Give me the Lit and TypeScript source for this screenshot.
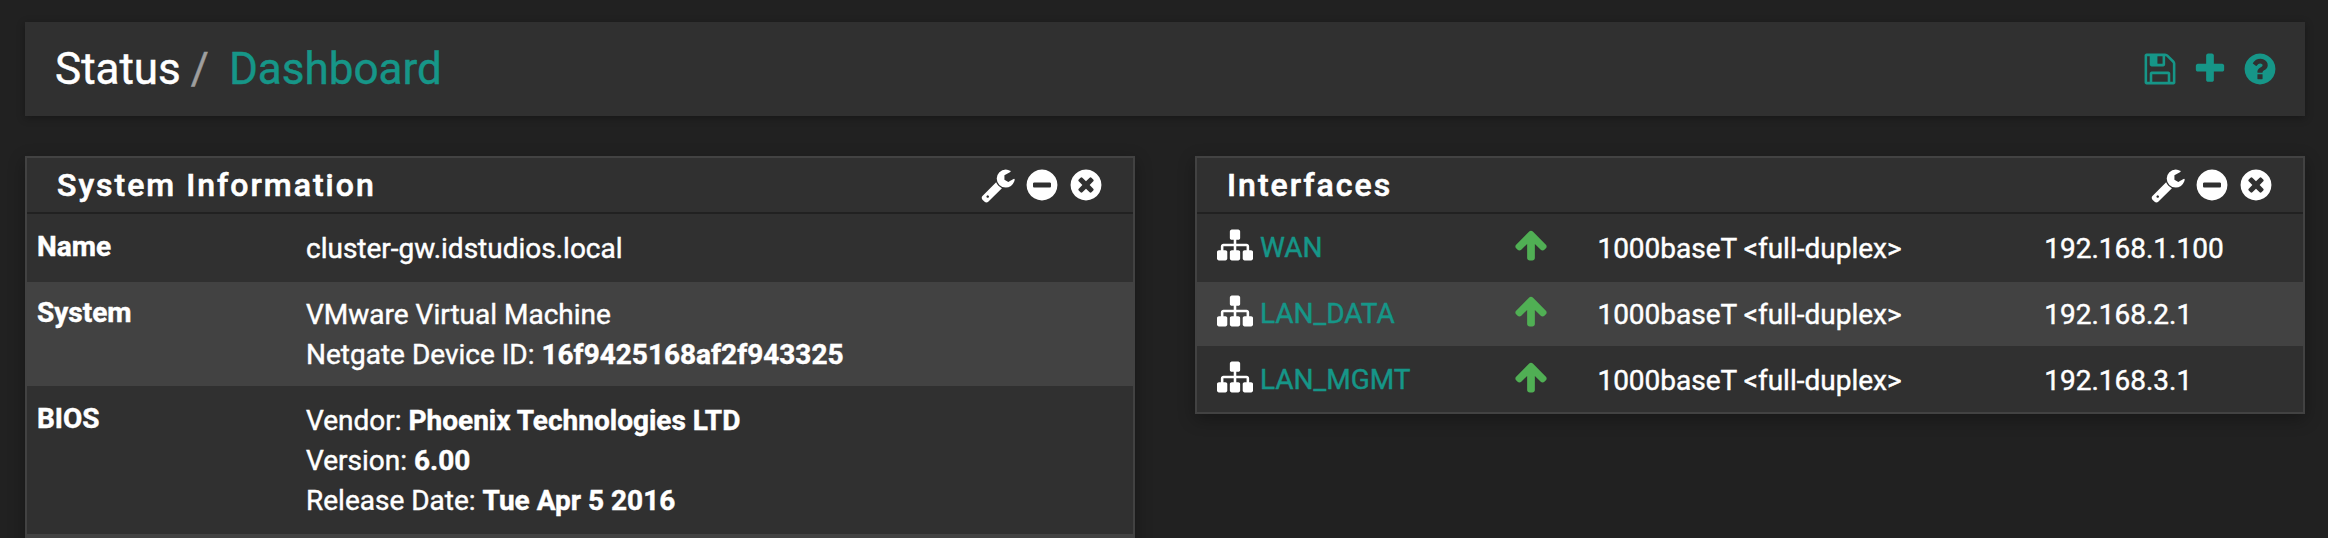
import { LitElement, html, css, svg } from "lit";
import { customElement, property } from "lit/decorators.js";

const DISC =
  "q0 209-103 385.5t-279.5 279.5-385.5 103-385.5-103-279.5-279.5-103-385.5 103-385.5 279.5-279.5 385.5-103 385.5 103 279.5 279.5 103 385.5z";

const ICONS: Record<string, string> = {
  save: "M512 1536h768v-384h-768v384zm896 0h128v-896q0-14-10-38.5t-20-34.5l-281-281q-10-10-34-20t-39-10v416q0 40-28 68t-68 28h-576q-40 0-68-28t-28-68v-416h-128v1280h128v-416q0-40 28-68t68-28h832q40 0 68 28t28 68v416zm-384-928v-320q0-13-9.5-22.5t-22.5-9.5h-192q-13 0-22.5 9.5t-9.5 22.5v320q0 13 9.5 22.5t22.5 9.5h192q13 0 22.5-9.5t9.5-22.5zm640 32v928q0 40-28 68t-68 28h-1344q-40 0-68-28t-28-68v-1344q0-40 28-68t68-28h928q40 0 88 20t76 48l280 280q28 28 48 76t20 88z",
  plus: "M1600 736v192q0 40-28 68t-68 28h-416v416q0 40-28 68t-68 28h-192q-40 0-68-28t-28-68v-416h-416q-40 0-68-28t-28-68v-192q0-40 28-68t68-28h416v-416q0-40 28-68t68-28h192q40 0 68 28t28 68v416h416q40 0 68 28t28 68z",
  help:
    "M1024 1376v-192q0-14-9-23t-23-9h-192q-14 0-23 9t-9 23v192q0 14 9 23t23 9h192q14 0 23-9t9-23zm256-672q0-88-55.5-163t-138.5-116-170-41q-243 0-371 213-15 24 8 42l132 100q7 6 19 6 16 0 25-12 53-68 86-92 34-24 86-24 48 0 85.5 26t37.5 59q0 38-20 61t-68 45q-63 28-115.5 86.5t-52.5 125.5v36q0 14 9 23t23 9h192q14 0 23-9t9-23q0-19 21.5-49.5t54.5-49.5q32-18 49-28.5t46-35 44.5-48 28-60.5 12.5-81zm384 192" +
    DISC,
  wrench:
    "M448 1472q0-26-19-45t-45-19-45 19-19 45 19 45 45 19 45-19 19-45zm644-420l-682 682q-37 37-90 37-52 0-91-37l-106-108q-38-36-38-90 0-53 38-91l681-681q39 98 114.5 173.5t173.5 114.5zm634-435q0 39-23 106-47 134-164.5 217.5t-258.5 83.5q-185 0-316.5-131.5t-131.5-316.5 131.5-316.5 316.5-131.5q58 0 121.5 16.5t107.5 46.5q16 11 16 28t-16 28l-293 169v224l193 107q5-3 79-48.5t135.5-81 70.5-35.5q15 0 23.5 10t8.5 25z",
  minus: "M1344 960v-128q0-26-19-45t-45-19h-768q-26 0-45 19t-19 45v128q0 26 19 45t45 19h768q26 0 45-19t19-45zm320-64" + DISC,
  close:
    "M1277 1122q0-26-19-45l-181-181 181-181q19-19 19-45 0-27-19-46l-90-90q-19-19-46-19-26 0-45 19l-181 181-181-181q-19-19-45-19-27 0-46 19l-90 90q-19 19-19 46 0 26 19 45l181 181-181 181q-19 19-19 45 0 27 19 46l90 90q19 19 46 19 26 0 45-19l181-181 181 181q19 19 45 19 27 0 46-19l90-90q19-19 19-46zm387-226" +
    DISC,
  sitemap:
    "M1792 1248v320q0 40-28 68t-68 28h-320q-40 0-68-28t-28-68v-320q0-40 28-68t68-28h96v-192h-512v192h96q40 0 68 28t28 68v320q0 40-28 68t-68 28h-320q-40 0-68-28t-28-68v-320q0-40 28-68t68-28h96v-192h-512v192h96q40 0 68 28t28 68v320q0 40-28 68t-68 28h-320q-40 0-68-28t-28-68v-320q0-40 28-68t68-28h96v-192q0-52 38-90t90-38h512v-192h-96q-40 0-68-28t-28-68v-320q0-40 28-68t68-28h320q40 0 68 28t28 68v320q0 40-28 68t-68 28h-96v192h512q52 0 90 38t38 90v192h96q40 0 68 28t28 68z",
  up: "M1675 971q0 51-37 90l-75 75q-38 38-91 38-54 0-90-38l-294-293v704q0 52-37.5 84.5t-90.5 32.5h-128q-53 0-90.5-32.5t-37.5-84.5v-704l-294 293q-36 38-90 38t-90-38l-75-75q-38-38-38-90 0-53 38-91l651-651q35-37 90-37 54 0 91 37l651 651q37 39 37 91z",
};

@customElement("fa-icon")
export class FaIcon extends LitElement {
  @property() name = "";
  static styles = css`
    :host { display: block; width: 36px; height: 36px; flex: none; }
    .glyph { display: block; width: 36px; height: 36px; fill: currentColor; }
  `;
  render() {
    return html`<svg class="glyph" viewBox="0 0 1792 1792">${svg`<path d=${ICONS[this.name]}></path>`}</svg>`;
  }
}

@customElement("widget-panel")
export class WidgetPanel extends LitElement {
  @property() heading = "";
  static styles = css`
    :host {
      display: block;
      box-sizing: border-box;
      border: 2px solid #424242;
      background: #303030;
      box-shadow: 0 5px 16px rgba(0, 0, 0, 0.32);
    }
    .head {
      display: flex;
      justify-content: space-between;
      height: 54px;
      box-sizing: content-box;
      border-bottom: 2px solid #212121;
      padding: 0 29.4px 0 30px;
    }
    .title {
      margin: 0;
      font-size: 32px;
      font-weight: 500;
      line-height: 54px;
      letter-spacing: 2px;
      -webkit-text-stroke: 0.6px currentColor;
    }
    .tools { display: flex; gap: 7.2px; padding-top: 8.7px; }
    .config { margin-right: 1.2px; }
  `;
  render() {
    return html`
      <div class="head">
        <h2 class="title">${this.heading}</h2>
        <div class="tools">
          <fa-icon class="config" name="wrench"></fa-icon>
          <fa-icon name="minus"></fa-icon>
          <fa-icon name="close"></fa-icon>
        </div>
      </div>
      <slot></slot>
    `;
  }
}

const INTERFACES = [
  { name: "WAN", media: "1000baseT <full-duplex>", ip: "192.168.1.100" },
  { name: "LAN_DATA", media: "1000baseT <full-duplex>", ip: "192.168.2.1" },
  { name: "LAN_MGMT", media: "1000baseT <full-duplex>", ip: "192.168.3.1" },
];

const SYSTEM = [
  { label: "Name", lines: [["cluster-gw.idstudios.local", ""]] },
  { label: "System", lines: [["VMware Virtual Machine", ""], ["Netgate Device ID: ", "16f9425168af2f943325"]] },
  {
    label: "BIOS",
    lines: [["Vendor: ", "Phoenix Technologies LTD"], ["Version: ", "6.00"], ["Release Date: ", "Tue Apr 5 2016"]],
  },
  { label: "", lines: [["", ""]] },
];

@customElement("app-root")
export class AppRoot extends LitElement {
  static styles = css`
    :host {
      display: block;
      box-sizing: border-box;
      height: 538px;
      overflow: hidden;
      padding: 22px 23px 0 25px;
      background: #212121;
      color: #fff;
      font: 28px/40px Roboto, sans-serif;
      -webkit-text-stroke: 0.45px currentColor;
    }
    .topbar {
      display: flex;
      justify-content: space-between;
      align-items: center;
      box-sizing: border-box;
      height: 94px;
      padding: 0 27.3px 0 30px;
      background: #303030;
      box-shadow: 0 2px 8px rgba(0, 0, 0, 0.3);
    }
    .crumbs { display: flex; font-size: 44px; line-height: 94px; }
    .slash { color: #9e9e9e; padding: 0 20px 0 10px; }
    .current { color: #169688; }
    .actions { display: flex; gap: 14px; color: #169688; }
    .columns {
      display: grid;
      grid-template-columns: 1110px 1110px;
      gap: 60px;
      align-items: start;
      margin-top: 40px;
    }
    .row {
      display: grid;
      border-top: 2px solid #303030;
      padding: 12px 0;
    }
    .row:nth-child(even) { background: #424242; }
    .sys { grid-template-columns: 269px 1fr; padding-left: 10px; }
    .label { font-weight: 700; margin-top: -1px; }
    .value { padding-top: 1px; margin-bottom: -1px; }
    .line { min-height: 40px; }
    .iface { grid-template-columns: 295.6px 84.8px 446.8px 1fr; padding-left: 20px; }
    .name { display: flex; gap: 7px; color: #169688; }
    .node { color: #fff; margin-top: -1.5px; }
    .up { color: #50af54; margin-top: -1px; }
  `;
  render() {
    return html`
      <header class="topbar">
        <div class="crumbs">
          <span>Status</span><span class="slash">/</span><span class="current">Dashboard</span>
        </div>
        <div class="actions">
          <fa-icon name="save"></fa-icon>
          <fa-icon name="plus"></fa-icon>
          <fa-icon name="help"></fa-icon>
        </div>
      </header>
      <main class="columns">
        <widget-panel heading="System Information">
          <div>
            ${SYSTEM.map(
              (r) => html`<div class="row sys">
                <div class="label">${r.label}</div>
                <div class="value">
                  ${r.lines.map(([text, strong]) => html`<div class="line">${text}<b>${strong}</b></div>`)}
                </div>
              </div>`
            )}
          </div>
        </widget-panel>
        <widget-panel heading="Interfaces">
          <div>
            ${INTERFACES.map(
              (i) => html`<div class="row iface">
                <div class="name"><fa-icon class="node" name="sitemap"></fa-icon><span>${i.name}</span></div>
                <fa-icon class="up" name="up"></fa-icon>
                <div class="value">${i.media}</div>
                <div class="value">${i.ip}</div>
              </div>`
            )}
          </div>
        </widget-panel>
      </main>
    `;
  }
}
